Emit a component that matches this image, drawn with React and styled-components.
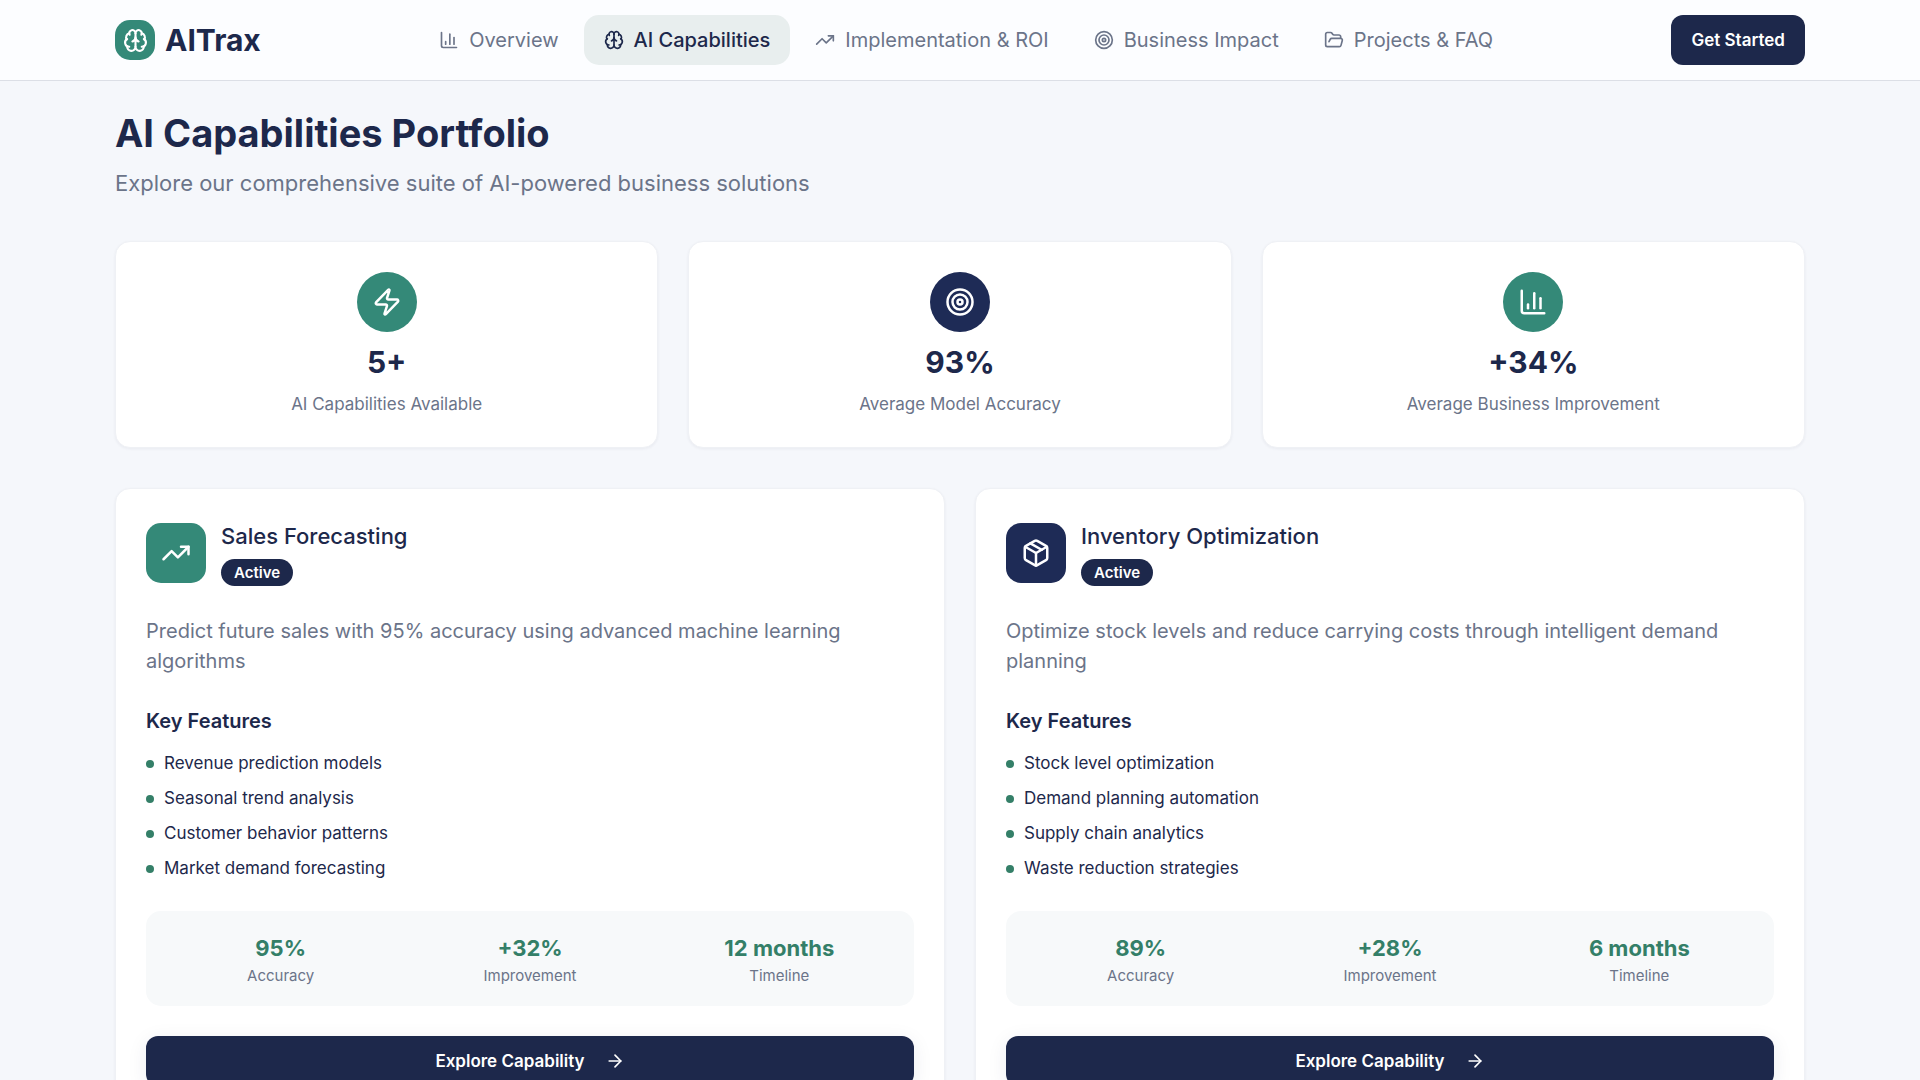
import React from "react";
import styled, { createGlobalStyle } from "styled-components";
import {
  ArrowRight,
  Brain,
  ChartColumn,
  FolderOpen,
  Package,
  Target,
  TrendingUp,
  Zap,
} from "lucide-react";

const navy = "#1d284b";
const teal = "#348978";
const green = "#347f68";
const muted = "#6b7489";

const GlobalStyle = createGlobalStyle`
  *, *::before, *::after { box-sizing: border-box; }
  body {
    margin: 0;
    background: #f5f7fb;
    color: ${navy};
    font-family: Inter, "Liberation Sans", sans-serif;
    font-size: 20px;
    line-height: 30px;
  }
  h1, h2, h3, p, ul, dl, dd { margin: 0; padding: 0; }
  button { font-family: inherit; cursor: pointer; }
`;

const Header = styled.header`
  background: #fcfdff;
  border-bottom: 1px solid #dcdfe6;
`;

const Container = styled.div`
  max-width: 1750px;
  margin: 0 auto;
  padding: 0 30px;
`;

const HeaderRow = styled(Container)`
  display: flex;
  align-items: center;
  justify-content: space-between;
  padding-top: 15px;
  padding-bottom: 15px;
`;

const Brand = styled.a`
  display: flex;
  align-items: center;
  gap: 10px;
  color: ${navy};
  font-size: 30px;
  line-height: 40px;
  font-weight: 700;
  text-decoration: none;
`;

const IconBox = styled.span`
  display: flex;
  align-items: center;
  justify-content: center;
  flex-shrink: 0;
  width: ${(p) => p.$size}px;
  height: ${(p) => p.$size}px;
  border-radius: ${(p) => (p.$round ? "50%" : "15px")};
  background: ${(p) => (p.$tone === "navy" ? "#1e2b56" : teal)};
  color: #fff;
`;

const Nav = styled.nav`
  display: flex;
  gap: 5px;
`;

const NavLink = styled.a`
  display: flex;
  align-items: center;
  gap: 10px;
  padding: 10px 20px;
  border-radius: 15px;
  background: ${(p) => (p.$active ? "#e8eeee" : "transparent")};
  color: ${(p) => (p.$active ? navy : muted)};
  font-weight: ${(p) => (p.$active ? 500 : 400)};
  text-decoration: none;
`;

const PrimaryButton = styled.button`
  display: flex;
  align-items: center;
  justify-content: center;
  gap: 20px;
  width: ${(p) => (p.$block ? "100%" : "auto")};
  height: 50px;
  padding: 0 20px;
  border: 0;
  border-radius: 12px;
  background: ${navy};
  color: #fff;
  font-size: 17px;
  font-weight: 600;
  box-shadow: ${(p) => (p.$block ? "0 4px 20px rgba(29, 40, 75, 0.08)" : "none")};
`;

const Main = styled(Container).attrs({ as: "main" })`
  padding-top: 30px;
`;

const Title = styled.h1`
  font-size: 38px;
  line-height: 45px;
  font-weight: 700;
`;

const Subtitle = styled.p`
  margin-top: 10px;
  color: ${muted};
  font-size: 22px;
  line-height: 35px;
`;

const Grid = styled.section`
  display: grid;
  grid-template-columns: repeat(${(p) => p.$columns}, 1fr);
  gap: 30px;
  margin-top: 40px;
`;

const Card = styled.article`
  padding: 30px;
  border: 1px solid #eff1f5;
  border-radius: 15px;
  background: #fff;
  box-shadow: 0 1px 3px rgba(29, 40, 75, 0.06);
`;

const StatCard = styled(Card)`
  display: flex;
  flex-direction: column;
  align-items: center;
  gap: 10px;
`;

const StatValue = styled.p`
  font-size: 30px;
  line-height: 40px;
  font-weight: 700;
`;

const StatLabel = styled.p`
  color: ${muted};
  font-size: 17px;
  line-height: 25px;
`;

const CardHead = styled.header`
  display: flex;
  align-items: center;
  gap: 15px;
`;

const CardTitle = styled.h2`
  font-size: 22px;
  line-height: 35px;
  font-weight: 500;
`;

const Badge = styled.span`
  display: block;
  width: fit-content;
  margin-top: 5px;
  padding: 0 13px;
  border-radius: 14px;
  background: ${navy};
  color: #fff;
  font-size: 15px;
  line-height: 27px;
  font-weight: 600;
`;

const Description = styled.p`
  margin-top: 30px;
  color: ${muted};
`;

const FeatureTitle = styled.h3`
  margin-top: 30px;
  font-size: 20px;
  line-height: 30px;
  font-weight: 600;
`;

const FeatureList = styled.ul`
  display: grid;
  gap: 10px;
  margin-top: 15px;
  list-style: none;
`;

const Feature = styled.li`
  display: flex;
  align-items: center;
  gap: 10px;
  font-size: 17px;
  line-height: 25px;

  &::before {
    content: "";
    width: 8px;
    height: 8px;
    border-radius: 50%;
    background: ${green};
  }
`;

const Metrics = styled.dl`
  display: grid;
  grid-template-columns: repeat(3, 1fr);
  gap: 20px;
  margin: 30px 0;
  padding: 20px;
  border-radius: 15px;
  background: #f7f9fa;
  text-align: center;
`;

const Metric = styled.div`
  display: flex;
  flex-direction: column-reverse;
`;

const MetricLabel = styled.dt`
  color: ${muted};
  font-size: 15px;
  line-height: 20px;
`;

const MetricValue = styled.dd`
  color: ${green};
  font-size: 22px;
  line-height: 35px;
  font-weight: 700;
`;

const navItems = [
  { label: "Overview", icon: ChartColumn },
  { label: "AI Capabilities", icon: Brain, active: true },
  { label: "Implementation & ROI", icon: TrendingUp },
  { label: "Business Impact", icon: Target },
  { label: "Projects & FAQ", icon: FolderOpen },
];

const stats = [
  { value: "5+", label: "AI Capabilities Available", icon: Zap, tone: "teal" },
  { value: "93%", label: "Average Model Accuracy", icon: Target, tone: "navy" },
  { value: "+34%", label: "Average Business Improvement", icon: ChartColumn, tone: "teal" },
];

const capabilities = [
  {
    title: "Sales Forecasting",
    icon: TrendingUp,
    tone: "teal",
    description:
      "Predict future sales with 95% accuracy using advanced machine learning algorithms",
    features: [
      "Revenue prediction models",
      "Seasonal trend analysis",
      "Customer behavior patterns",
      "Market demand forecasting",
    ],
    metrics: { Accuracy: "95%", Improvement: "+32%", Timeline: "12 months" },
  },
  {
    title: "Inventory Optimization",
    icon: Package,
    tone: "navy",
    description:
      "Optimize stock levels and reduce carrying costs through intelligent demand planning",
    features: [
      "Stock level optimization",
      "Demand planning automation",
      "Supply chain analytics",
      "Waste reduction strategies",
    ],
    metrics: { Accuracy: "89%", Improvement: "+28%", Timeline: "6 months" },
  },
];

export default function App() {
  return (
    <>
      <GlobalStyle />
      <Header>
        <HeaderRow>
          <Brand href="#">
            <IconBox $size={40}>
              <Brain size={25} />
            </IconBox>
            AITrax
          </Brand>
          <Nav>
            {navItems.map(({ label, icon: Icon, active }) => (
              <NavLink key={label} href="#" $active={active}>
                <Icon size={20} />
                {label}
              </NavLink>
            ))}
          </Nav>
          <PrimaryButton type="button">Get Started</PrimaryButton>
        </HeaderRow>
      </Header>
      <Main>
        <Title>AI Capabilities Portfolio</Title>
        <Subtitle>Explore our comprehensive suite of AI-powered business solutions</Subtitle>
        <Grid $columns={3}>
          {stats.map(({ value, label, icon: Icon, tone }) => (
            <StatCard key={label}>
              <IconBox $size={60} $round $tone={tone}>
                <Icon size={30} />
              </IconBox>
              <StatValue>{value}</StatValue>
              <StatLabel>{label}</StatLabel>
            </StatCard>
          ))}
        </Grid>
        <Grid $columns={2}>
          {capabilities.map(({ title, icon: Icon, tone, description, features, metrics }) => (
            <Card key={title}>
              <CardHead>
                <IconBox $size={60} $tone={tone}>
                  <Icon size={30} />
                </IconBox>
                <div>
                  <CardTitle>{title}</CardTitle>
                  <Badge>Active</Badge>
                </div>
              </CardHead>
              <Description>{description}</Description>
              <FeatureTitle>Key Features</FeatureTitle>
              <FeatureList>
                {features.map((feature) => (
                  <Feature key={feature}>{feature}</Feature>
                ))}
              </FeatureList>
              <Metrics>
                {Object.entries(metrics).map(([label, value]) => (
                  <Metric key={label}>
                    <MetricLabel>{label}</MetricLabel>
                    <MetricValue>{value}</MetricValue>
                  </Metric>
                ))}
              </Metrics>
              <PrimaryButton type="button" $block>
                Explore Capability
                <ArrowRight size={20} />
              </PrimaryButton>
            </Card>
          ))}
        </Grid>
      </Main>
    </>
  );
}
